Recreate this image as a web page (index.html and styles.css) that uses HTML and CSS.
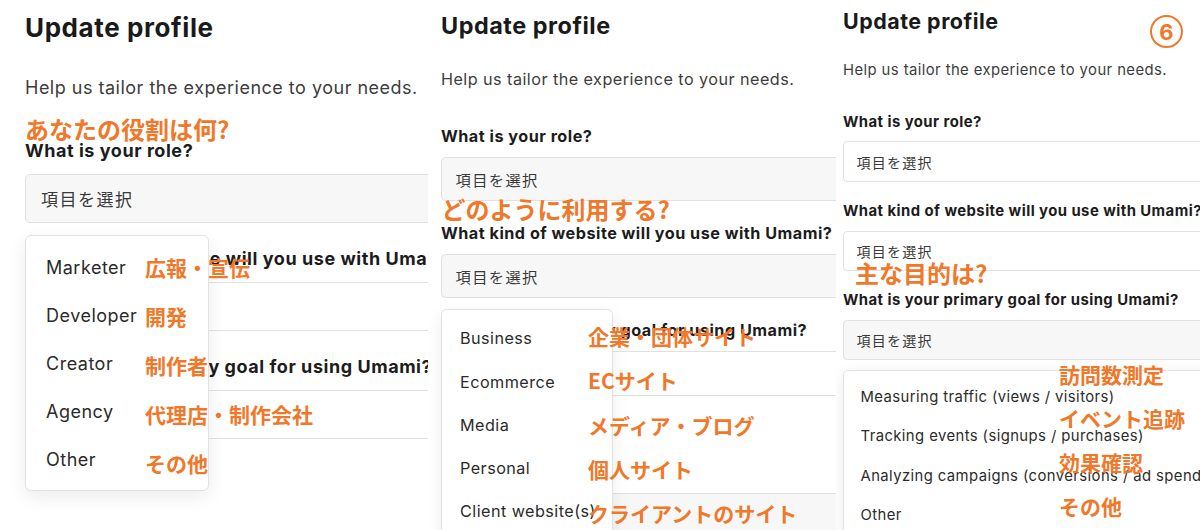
FILE: index.html
```html
<!DOCTYPE html>
<html lang="ja">
<head>
<meta charset="utf-8">
<title>Update profile</title>
<link rel="stylesheet" href="styles.css">
</head>
<body>
<div class="board">

  <section class="shot shot-role">
    <div class="sheet">
      <h1 class="title">Update profile</h1>
      <p class="intro">Help us tailor the experience to your needs.</p>
      <div class="field">
        <div class="label">What is your role?</div>
        <div class="control">
          <div class="select is-muted">項目を選択</div>
          <ul class="menu menu-role">
            <li>Marketer</li>
            <li>Developer</li>
            <li>Creator</li>
            <li>Agency</li>
            <li>Other</li>
          </ul>
        </div>
      </div>
      <div class="field">
        <div class="label">What kind of website will you use with Umami?</div>
        <div class="control"><div class="select">項目を選択</div></div>
      </div>
      <div class="field">
        <div class="label">What is your primary goal for using Umami?</div>
        <div class="control"><div class="select">項目を選択</div></div>
      </div>
      <div class="footer"></div>
    </div>
    <div class="note-title">あなたの役割は何?</div>
    <ul class="notes">
      <li>広報・宣伝</li>
      <li>開発</li>
      <li>制作者</li>
      <li>代理店・制作会社</li>
      <li>その他</li>
    </ul>
  </section>

  <section class="shot shot-site">
    <div class="sheet">
      <h1 class="title">Update profile</h1>
      <p class="intro">Help us tailor the experience to your needs.</p>
      <div class="field">
        <div class="label">What is your role?</div>
        <div class="control"><div class="select is-muted">項目を選択</div></div>
      </div>
      <div class="field">
        <div class="label">What kind of website will you use with Umami?</div>
        <div class="control">
          <div class="select is-muted">項目を選択</div>
          <ul class="menu menu-site">
            <li>Business</li>
            <li>Ecommerce</li>
            <li>Media</li>
            <li>Personal</li>
            <li>Client website(s)</li>
          </ul>
        </div>
      </div>
      <div class="field">
        <div class="label">What is your primary goal for using Umami?</div>
        <div class="control"><div class="select">項目を選択</div></div>
      </div>
      <div class="footer"></div>
    </div>
    <div class="note-title">どのように利用する?</div>
    <ul class="notes">
      <li>企業・団体サイト</li>
      <li>ECサイト</li>
      <li>メディア・ブログ</li>
      <li>個人サイト</li>
      <li>クライアントのサイト</li>
    </ul>
  </section>

  <section class="shot shot-goal">
    <div class="sheet">
      <h1 class="title">Update profile</h1>
      <p class="intro">Help us tailor the experience to your needs.</p>
      <div class="field">
        <div class="label">What is your role?</div>
        <div class="control"><div class="select">項目を選択</div></div>
      </div>
      <div class="field">
        <div class="label">What kind of website will you use with Umami?</div>
        <div class="control"><div class="select">項目を選択</div></div>
      </div>
      <div class="field">
        <div class="label">What is your primary goal for using Umami?</div>
        <div class="control">
          <div class="select is-muted">項目を選択</div>
          <ul class="menu menu-goal">
            <li>Measuring traffic (views / visitors)</li>
            <li>Tracking events (signups / purchases)</li>
            <li>Analyzing campaigns (conversions / ad spend)</li>
            <li>Other</li>
          </ul>
        </div>
      </div>
      <div class="footer"></div>
    </div>
    <div class="step">6</div>
    <div class="note-title">主な目的は?</div>
    <ul class="notes">
      <li>訪問数測定</li>
      <li>イベント追跡</li>
      <li>効果確認</li>
      <li>その他</li>
    </ul>
  </section>

</div>
</body>
</html>
```

FILE: styles.css
```css
* {
  box-sizing: border-box;
}

html,
body {
  margin: 0;
  padding: 0;
  background: #ffffff;
}

body {
  font-family: Inter, "Noto Sans CJK JP", sans-serif;
  color: #1c1c1c;
}

.board {
  display: flex;
  width: 1200px;
  height: 530px;
  overflow: hidden;
}

.shot {
  position: relative;
  height: 530px;
  overflow: hidden;
  flex: none;
  background: #ffffff;
}

.shot-role {
  width: 428px;
  padding-left: 25px;
}

.shot-site {
  width: 408px;
  padding-left: 13px;
  padding-top: 1px;
}

.shot-goal {
  width: 364px;
  padding-left: 7px;
}

/* the three screenshots were taken at different sizes */
.shot-site .sheet {
  zoom: 0.9;
}

.shot-goal .sheet {
  zoom: 0.825;
  margin-top: -2px;
}

.sheet {
  width: 500px;
  padding-top: 12px;
}

.title {
  margin: 0;
  font-size: 26px;
  line-height: 32px;
  font-weight: 700;
  letter-spacing: 0.6px;
  color: #1a1a1a;
}

.intro {
  margin: 31.5px 0 0;
  font-size: 18px;
  line-height: 24px;
  letter-spacing: 0.5px;
  color: #3d3d3d;
}

.field {
  margin-top: 24px;
}

.intro + .field {
  margin-top: 39px;
}

.label {
  font-size: 18px;
  line-height: 24px;
  font-weight: 700;
  letter-spacing: 0.55px;
  color: #1c1c1c;
  white-space: nowrap;
  margin-bottom: 11px;
}

.control {
  position: relative;
}

.select {
  height: 49px;
  display: flex;
  align-items: center;
  padding-left: 15px;
  border: 1px solid #e1e1e1;
  border-radius: 5px;
  background: #ffffff;
  font-size: 17px;
  letter-spacing: 1.5px;
  color: #3a3a3a;
  font-family: "Noto Sans CJK JP", Inter, sans-serif;
}

.select.is-muted {
  background: #f7f7f7;
}

.menu {
  position: absolute;
  top: calc(100% + 12px);
  left: 0;
  z-index: 2;
  margin: 0;
  padding: 8px 0 6px;
  list-style: none;
  background: #ffffff;
  border: 1px solid #e2e2e2;
  border-radius: 6px;
  box-shadow: 0 6px 18px rgba(0, 0, 0, 0.08);
}

.menu li {
  height: 48px;
  line-height: 48px;
  padding-left: 20px;
  font-size: 18px;
  letter-spacing: 0.5px;
  color: #2b2b2b;
  white-space: nowrap;
}

.menu-role {
  width: 184px;
}

.menu-site {
  width: 191px;
}

.menu-goal {
  width: 500px;
}

.footer {
  margin-top: 108.5px;
  height: 120px;
  border-top: 1px solid #e1e1e1;
  background: #f7f7f7;
}

/* orange annotations laid over the screenshots */
.note-title,
.notes {
  position: absolute;
  z-index: 3;
  margin: 0;
  padding: 0;
  list-style: none;
  color: #f0782a;
  font-family: "Noto Sans CJK JP", sans-serif;
  font-weight: 700;
  white-space: nowrap;
}

.note-title {
  font-size: 24px;
  line-height: 24px;
}

.notes {
  display: flex;
  flex-direction: column;
  font-size: 21px;
}

.shot-role .note-title {
  left: 25px;
  top: 117px;
}

.shot-role .notes {
  left: 145px;
  top: 242.5px;
  line-height: 49px;
}

.shot-site .note-title {
  left: 13.5px;
  top: 197px;
}

.shot-site .notes {
  left: 160px;
  top: 314px;
  line-height: 44.25px;
}

.shot-goal .note-title {
  left: 19px;
  top: 261px;
}

.shot-goal .notes {
  left: 223px;
  top: 352px;
  line-height: 44px;
}

.step {
  position: absolute;
  z-index: 3;
  left: 314px;
  top: 15px;
  width: 33px;
  height: 33px;
  border: 2px solid #f0782a;
  border-radius: 50%;
  display: flex;
  align-items: center;
  justify-content: center;
  color: #f0782a;
  font-family: Inter, sans-serif;
  font-weight: 700;
  font-size: 22px;
  line-height: 1;
}
```
